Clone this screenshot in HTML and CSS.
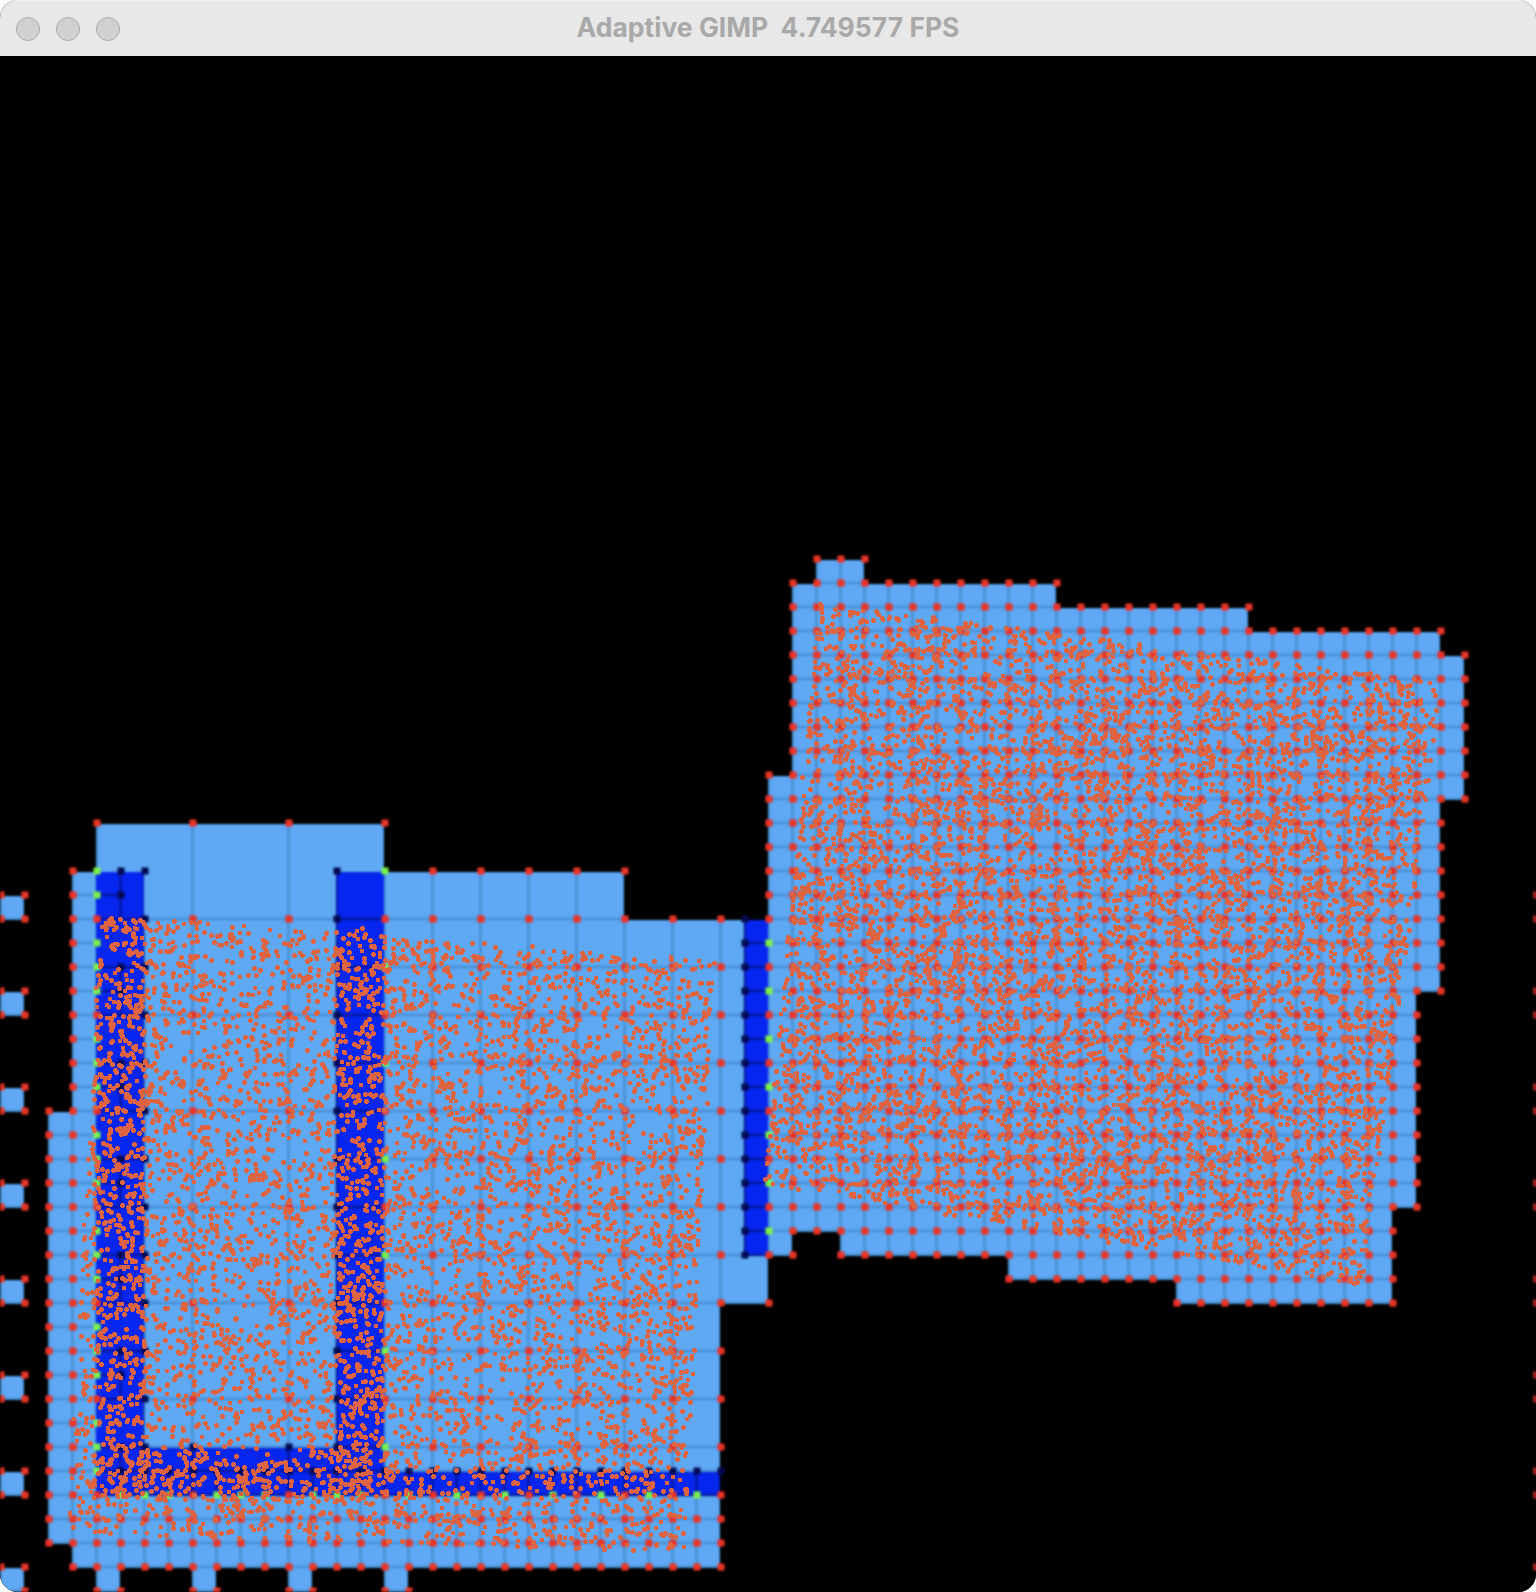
FILE: index.html
```html
<!DOCTYPE html>
<html lang="en">

<head>
    <meta charset="UTF-8" />
    <meta name="viewport" content="width=device-width, initial-scale=1.0" />
    <title>Adaptive GIMP</title>
    <link rel="stylesheet" href="styles.css">
</head>

<body>
    <div class="window">
        <div class="titlebar">
            <div class="lights">
                <span class="light"></span>
                <span class="light"></span>
                <span class="light"></span>
            </div>
            <div class="title">Adaptive GIMP  4.749577 FPS</div>
        </div>
        <canvas id="view" width="1536" height="1536"></canvas>
    </div>
    <script src="script.js"></script>
</body>

</html>
```

FILE: styles.css
```css
body {
    margin: 0;
    padding: 0;
    background-color: #fff;
}

.window {
    width: 1536px;
    height: 1592px;
    border-radius: 18px;
    overflow: hidden;
    background-color: #000;
}

.titlebar {
    height: 56px;
    box-sizing: border-box;
    display: grid;
    grid-template-columns: 1fr auto 1fr;
    align-items: center;
    background-color: #e8e8e8;
    border-top: 1px solid #f1f1f1;
}

.lights {
    display: flex;
    gap: 16px;
    padding-left: 16px;
}

.light {
    width: 24px;
    height: 24px;
    box-sizing: border-box;
    border-radius: 50%;
    background-color: #d1d1d1;
    border: 1px solid #acacac;
}

.title {
    font-family: Inter, "Liberation Sans", sans-serif;
    font-size: 26.5px;
    font-weight: 700;
    color: #a9a9a9;
    white-space: pre;
    line-height: 48px;
    padding-bottom: 4px;
}

#view {
    display: block;
}
```

FILE: script.js
```js
var LIGHT = "#5fa8f3";
var LIGHT_LINE = "#4c92d6";
var BLUE = "#0526ef";
var BLUE_LINE = "#04169c";
var RED = "#ee3224";
var GREEN = "#7bf24a";
var DARK = "#030a52";
var SPECK = "#de6341";
var CELL = 24;

var view = document.getElementById("view");
var ctx = layer();
var nodes = {};

function layer() {
    var c = document.createElement("canvas");
    c.width = view.width;
    c.height = view.height;
    return c.getContext("2d");
}

function range(a, b, step) {
    var out = [];
    for (var v = a; v <= b; v += step || 1) out.push(v);
    return out;
}

function setNode(i, j, color) {
    nodes[i + "," + j] = { i: i, j: j, color: color };
}

function strokeLine(i0, j0, i1, j1) {
    ctx.beginPath();
    ctx.moveTo(i0 * CELL + 0.5, j0 * CELL - 1);
    ctx.lineTo(i1 * CELL + 0.5, j1 * CELL - 1);
    ctx.stroke();
}

// filled block with lines on xs/ys, red node on each crossing
function grid(xs, ys) {
    var x0 = xs[0] * CELL, y0 = ys[0] * CELL;
    var w = xs[xs.length - 1] * CELL - x0, h = ys[ys.length - 1] * CELL - y0;
    ctx.fillStyle = LIGHT;
    ctx.fillRect(x0, y0, w, h);
    ctx.save();
    ctx.beginPath();
    ctx.rect(x0, y0, w, h);
    ctx.clip();
    ctx.strokeStyle = LIGHT_LINE;
    ctx.lineWidth = 3;
    xs.forEach(function (i) { strokeLine(i, ys[0] - 1, i, ys[ys.length - 1] + 1); });
    ys.forEach(function (j) { strokeLine(xs[0] - 1, j, xs[xs.length - 1] + 1, j); });
    ctx.restore();
    xs.forEach(function (i) {
        ys.forEach(function (j) { setNode(i, j, RED); });
    });
}

function drawLeftMesh() {
    var j, i;
    grid(range(4, 16, 4), [32, 36]);
    grid(range(16, 26, 2), [34, 36]);
    grid([3, 4], range(34, 44));
    grid([2, 3, 4], range(44, 62));
    grid(range(3, 30), [62, 63]);
    grid(range(4, 30), range(60, 62));
    grid([6, 8, 12, 14], range(36, 56, 4).concat([58]));
    grid(range(16, 30, 2), range(36, 58, 2).concat([59]));
    grid([30, 31], range(36, 50, 2));
    grid([30, 32], [50, 52]);

    // separate little cells along the left and the bottom
    for (j = 35; j <= 63; j += 4) {
        grid([0, 1], [j, j + 1]);
        setNode(64, j, RED);
        setNode(64, j + 1, RED);
    }
    [4, 8, 12, 16].forEach(function (col) { grid([col, col + 1], [63, 64]); });

    // fine cells, dark lines stay inside them
    var fine = [[4, 34, 6, 60], [14, 34, 16, 60], [4, 58, 16, 60], [16, 59, 30, 60], [31, 36, 32, 50]];
    ctx.save();
    ctx.beginPath();
    fine.forEach(function (r) {
        ctx.rect(r[0] * CELL, r[1] * CELL, (r[2] - r[0]) * CELL, (r[3] - r[1]) * CELL);
    });
    ctx.fillStyle = BLUE;
    ctx.fill();
    ctx.clip();

    ctx.strokeStyle = BLUE_LINE;
    ctx.lineWidth = 2.5;
    strokeLine(5, 34, 5, 36);
    strokeLine(4, 35, 5, 35);
    strokeLine(6, 34, 6, 58);
    strokeLine(14, 34, 14, 58);
    for (j = 36; j <= 56; j += 4) {
        strokeLine(4, j, 6, j);
        strokeLine(4, j + 2, 6, j + 2);
        strokeLine(4, j + 3, 5, j + 3);
        strokeLine(5, j + 2, 5, j + 4);
        setNode(5, j + 2, DARK);
        setNode(5, j + 3, DARK);
    }
    for (j = 34; j <= 58; j += 2) {
        strokeLine(14, j, 16, j);
        setNode(6, j, DARK);
        setNode(14, j, DARK);
        setNode(16, j, j % 4 == 0 ? RED : GREEN);
    }
    for (j = 36; j <= 60; j++) {
        setNode(4, j, j % 4 == 0 ? RED : GREEN);
    }
    setNode(4, 34, GREEN);
    setNode(4, 35, GREEN);
    setNode(5, 34, DARK);
    setNode(5, 35, DARK);

    // bottom band
    strokeLine(4, 58, 16, 58);
    strokeLine(4, 59, 30, 59);
    strokeLine(4, 60, 30, 60);
    strokeLine(8, 58, 8, 60);
    strokeLine(12, 58, 12, 60);
    setNode(8, 58, DARK);
    setNode(12, 58, DARK);
    for (i = 5; i <= 30; i++) {
        strokeLine(i, 59, i, 60);
        setNode(i, 59, DARK);
        if (i <= 16) setNode(i, 60, i % 4 == 0 ? RED : GREEN);
        else setNode(i, 60, i % 2 == 0 ? RED : GREEN);
    }

    // strip between the two meshes
    for (j = 36; j <= 50; j++) {
        strokeLine(31, j, 32, j);
        setNode(31, j, DARK);
    }
    strokeLine(31, 36, 31, 50);
    ctx.restore();
}

function drawRightMesh() {
    var rows = [[21, 34, 36], [22, 33, 44], [23, 33, 52], [24, 33, 60]];
    var j;
    for (j = 25; j <= 29; j++) rows.push([j, 33, 61]);
    rows.push([30, 32, 61]);
    for (j = 31; j <= 38; j++) rows.push([j, 32, 60]);
    for (j = 39; j <= 47; j++) rows.push([j, 32, 59]);
    rows.push([48, 32, 58], [49, 32, 33], [49, 35, 58], [50, 42, 58], [51, 49, 58]);
    rows.forEach(function (r) {
        grid(range(r[1], r[2]), [r[0], r[0] + 1]);
    });
    // shared column with the strip
    for (j = 37; j <= 49; j += 2) setNode(32, j, GREEN);
}

function drawNodes() {
    Object.keys(nodes).forEach(function (key) {
        var n = nodes[key];
        ctx.fillStyle = n.color;
        ctx.fillRect(n.i * CELL - 2.5, n.j * CELL - 4.5, 7, 7);
    });
}

var seed = 20240611;
function random() {
    seed = (seed + 0x6d2b79f5) | 0;
    var t = Math.imul(seed ^ (seed >>> 15), 1 | seed);
    t = (t + Math.imul(t ^ (t >>> 7), 61 | t)) ^ t;
    return ((t ^ (t >>> 14)) >>> 0) / 4294967296;
}

function speck(s, x, y) {
    x = Math.round(x);
    y = Math.round(y);
    if (random() < 0.35) {
        s.fillRect(x, y, 4, 4);
    } else {
        s.fillRect(x, y + 1, 5, 3);
        s.fillRect(x + 1, y, 3, 5);
    }
}

// corners given in page pixels: top left, top right, bottom right, bottom left
function scatter(s, q, count) {
    for (var n = 0; n < count; n++) {
        var u = random(), v = random();
        var x = (1 - v) * ((1 - u) * q[0][0] + u * q[1][0]) + v * ((1 - u) * q[3][0] + u * q[2][0]);
        var y = (1 - v) * ((1 - u) * q[0][1] + u * q[1][1]) + v * ((1 - u) * q[3][1] + u * q[2][1]);
        speck(s, x, y - 56);
    }
}

function scatterBox(s, x0, y0, x1, y1, count) {
    scatter(s, [[x0, y0], [x1, y0], [x1, y1], [x0, y1]], count);
}

drawLeftMesh();
drawRightMesh();
drawNodes();

var specks = layer();
specks.fillStyle = SPECK;
scatter(specks, [[98, 912], [713, 958], [682, 1550], [66, 1532]], 6000);
scatter(specks, [[817, 600], [1440, 680], [1360, 1283], [762, 1182]], 7800);
scatterBox(specks, 94, 915, 146, 1500, 260);
scatterBox(specks, 334, 925, 386, 1500, 220);
scatterBox(specks, 96, 1450, 384, 1500, 120);

var g = view.getContext("2d");
g.fillStyle = "#000";
g.fillRect(0, 0, view.width, view.height);
g.filter = "blur(0.8px)";
g.drawImage(ctx.canvas, 0, 0);
g.filter = "blur(0.3px)";
g.drawImage(specks.canvas, 0, 0);
```
